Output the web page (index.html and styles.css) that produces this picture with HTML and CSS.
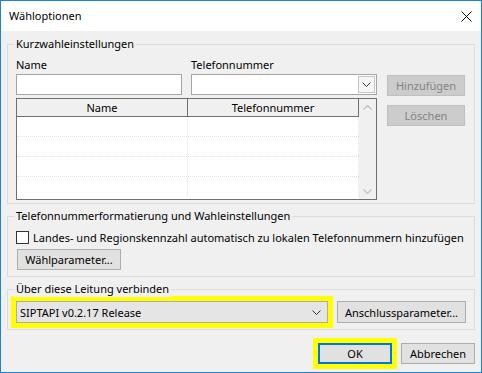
FILE: index.html
```html
<!DOCTYPE html>
<html lang="de">
<head>
  <meta charset="UTF-8">
  <title>Wähloptionen</title>
  <link rel="stylesheet" href="styles.css">
</head>
<body>
  <div class="window">
    <!-- Title bar -->
    <div class="titlebar">
      <span class="title">Wähloptionen</span>
      <svg class="close" width="11" height="11" viewBox="0 0 11 11">
        <path d="M0.5 0.5 L10.5 10.5 M10.5 0.5 L0.5 10.5" stroke="#000" stroke-width="1" fill="none"/>
      </svg>
    </div>

    <div class="content">
      <!-- Speed dial -->
      <div class="group g1">
        <div class="legend">Kurzwahleinstellungen</div>
        <div class="speed-main">
          <div class="fields">
            <div class="field f-name">
              <div class="label">Name</div>
              <div class="textbox"></div>
            </div>
            <div class="field f-phone">
              <div class="label">Telefonnummer</div>
              <div class="textbox combo-edit">
                <span class="drop-btn">
                  <svg width="9" height="5" viewBox="0 0 9 5"><path d="M0.5 0.5 L4.5 4.5 L8.5 0.5" stroke="#333" fill="none"/></svg>
                </span>
              </div>
            </div>
          </div>
          <div class="list">
            <div class="list-table">
              <div class="list-head">
                <div class="col">Name</div>
                <div class="col">Telefonnummer</div>
              </div>
              <div class="row"><div class="cell"></div><div class="cell"></div></div>
              <div class="row"><div class="cell"></div><div class="cell"></div></div>
              <div class="row"><div class="cell"></div><div class="cell"></div></div>
              <div class="row last"><div class="cell"></div><div class="cell"></div></div>
            </div>
            <div class="scrollbar">
              <svg width="9" height="5" viewBox="0 0 9 5"><path d="M0.5 4.5 L4.5 0.5 L8.5 4.5" stroke="#c2c2c2" stroke-width="1.3" fill="none"/></svg>
              <svg width="9" height="5" viewBox="0 0 9 5"><path d="M0.5 0.5 L4.5 4.5 L8.5 0.5" stroke="#c2c2c2" stroke-width="1.3" fill="none"/></svg>
            </div>
          </div>
        </div>
        <div class="side-buttons">
          <button class="btn disabled">Hinzufügen</button>
          <button class="btn disabled">Löschen</button>
        </div>
      </div>

      <!-- Formatting -->
      <div class="group g2">
        <div class="legend">Telefonnummerformatierung und Wahleinstellungen</div>
        <div class="check-row">
          <span class="checkbox"></span>
          <span>Landes- und Regionskennzahl automatisch zu lokalen Telefonnummern hinzufügen</span>
        </div>
        <button class="btn btn-dial">Wählparameter...</button>
      </div>

      <!-- Line -->
      <div class="group g3">
        <div class="legend">Über diese Leitung verbinden</div>
        <div class="line-row">
          <div class="combo highlight">
            <span>SIPTAPI v0.2.17 Release</span>
            <svg width="9" height="5" viewBox="0 0 9 5"><path d="M0.5 0.5 L4.5 4.5 L8.5 0.5" stroke="#333" fill="none"/></svg>
          </div>
          <button class="btn btn-line">Anschlussparameter...</button>
        </div>
      </div>

      <div class="footer">
        <button class="btn btn-ok highlight">OK</button>
        <button class="btn">Abbrechen</button>
      </div>
    </div>
  </div>
</body>
</html>
```

FILE: styles.css
```css
/* General Reset */
* {
  box-sizing: border-box;
}

body {
  margin: 0;
  font-family: "Noto Sans", "Open Sans", sans-serif;
  font-size: 11px;
  color: #000;
  background-color: #fff;
}

/* Window */
.window {
  width: 482px;
  height: 373px;
  border: 1px solid #1883d7;
  background-color: #f0f0f0;
  display: flex;
  flex-direction: column;
}

.titlebar {
  height: 30px;
  flex: none;
  background-color: #fff;
  display: flex;
  align-items: center;
  justify-content: space-between;
  padding: 0 9px 0 8px;
}

.title {
  line-height: 16px;
}

.content {
  padding: 13px 6px 0 6px;
  display: flex;
  flex-direction: column;
}

/* Group boxes */
.group {
  position: relative;
  border: 1px solid #dcdcdc;
}

.legend {
  position: absolute;
  top: -9px;
  left: 6px;
  padding: 0 2px;
  line-height: 16px;
  background-color: #f0f0f0;
  white-space: nowrap;
}

.g1 {
  height: 160px;
  padding: 12px 0 0 8px;
  display: flex;
}

.g2 {
  margin-top: 12px;
  padding: 13px 8px 6px 8px;
}

.g3 {
  margin-top: 12px;
  padding: 11px 8px 6px 8px;
}

/* Speed dial */
.speed-main {
  width: 361px;
}

.fields {
  display: flex;
  gap: 9px;
}

.field {
  display: flex;
  flex-direction: column;
}

.f-name {
  width: 166px;
}

.f-phone {
  width: 186px;
}

.label {
  line-height: 15px;
  margin-bottom: 2px;
}

.textbox {
  height: 21px;
  background-color: #fff;
  border: 1px solid #a5a5a5;
}

.combo-edit {
  display: flex;
  justify-content: flex-end;
  padding: 1px;
}

.drop-btn {
  width: 17px;
  height: 17px;
  border: 1px solid #c4c4c4;
  background-color: #f6f6f6;
  display: flex;
  align-items: center;
  justify-content: center;
}

.list {
  margin-top: 3px;
  height: 102px;
  border: 1px solid #6f6f6f;
  background-color: #fff;
  display: flex;
}

.list-table {
  flex: 1;
}

.list-head {
  height: 18px;
  display: flex;
  background-color: #f0f0f0;
  border-bottom: 1px solid #6f6f6f;
}

.list-head .col {
  width: 171px;
  text-align: center;
  line-height: 17px;
  border-right: 1px solid #6f6f6f;
}

.row {
  height: 20px;
  display: flex;
  border-bottom: 1px dotted #e3e3e3;
}

.row.last {
  border-bottom: none;
}

.cell {
  width: 171px;
  border-right: 1px dotted #e3e3e3;
}

.scrollbar {
  width: 17px;
  background-color: #f0f0f0;
  display: flex;
  flex-direction: column;
  justify-content: space-between;
  align-items: center;
  padding: 6px 0 5px;
}

.side-buttons {
  margin-left: 10px;
  padding-top: 18px;
  display: flex;
  flex-direction: column;
  gap: 9px;
}

/* Buttons */
.btn {
  font-family: inherit;
  font-size: 11px;
  color: #000;
  height: 21px;
  padding: 0;
  border: 1px solid #adadad;
  background-color: #e1e1e1;
  line-height: 17px;
}

.btn.disabled {
  width: 78px;
  color: #838383;
  background-color: #cccccc;
  border-color: #bfbfbf;
}

.btn-dial {
  display: block;
  margin: 4px 0 0 1px;
  width: 104px;
}

.check-row {
  height: 15px;
  display: flex;
  align-items: center;
  gap: 4px;
  white-space: nowrap;
}

.checkbox {
  width: 13px;
  height: 13px;
  flex: none;
  background-color: #fff;
  border: 1px solid #333;
}

/* Line selection */
.line-row {
  display: flex;
  align-items: center;
}

.combo {
  width: 312px;
  height: 22px;
  border: 1px solid #adadad;
  background-color: #e5e5e5;
  display: flex;
  align-items: center;
  justify-content: space-between;
  padding: 0 6px 0 3px;
}

.btn-line {
  margin-left: 9px;
  width: 129px;
  height: 22px;
}

.highlight {
  outline: 5px solid #ffff00;
}

/* Footer */
.footer {
  margin-top: 13px;
  display: flex;
  justify-content: flex-end;
  gap: 9px;
}

.footer .btn {
  width: 74px;
}

.btn-ok {
  border: 2px solid #0078d7;
}
```
